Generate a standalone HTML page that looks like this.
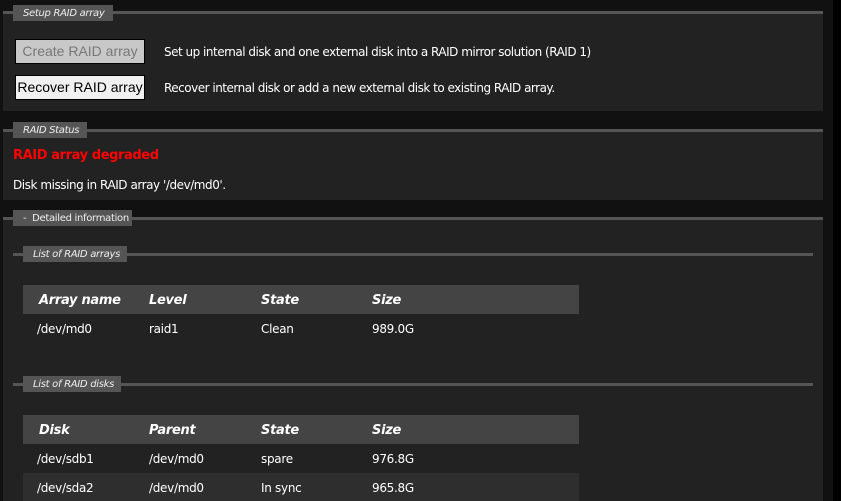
<!DOCTYPE html>
<html><head><meta charset="utf-8"><style>
*{margin:0;padding:0;box-sizing:border-box}
html,body{width:841px;height:501px;overflow:hidden}
body{background:#111;position:relative;font-family:"DejaVu Sans","Liberation Sans",sans-serif;color:#fff;font-size:12px}
.a{position:absolute}
.panel{position:absolute;left:3px;width:820px;background:#222}
.line{position:absolute;height:3px;background:#555}
.leg{position:absolute;background:#555;color:#eee;font-style:italic;font-size:10px;line-height:17px;padding-left:10px;white-space:nowrap;letter-spacing:-0.3px}
.btn{position:absolute;left:15px;width:130px;height:25px;border:1px solid #000;font-family:"Liberation Sans",sans-serif;font-size:14px;line-height:23px;text-align:center}
.txt{position:absolute;left:164px;font-size:12px;letter-spacing:-0.5px;color:#fff}
.th{position:absolute;left:23px;width:556px;height:29px;background:#444}
.row{position:absolute;left:23px;width:556px;height:29px}
.c{position:absolute;top:0;line-height:31px;font-size:12px;letter-spacing:-0.3px}
.th .c{font-weight:bold;font-style:italic;font-size:13px;line-height:31px}
</style></head><body>
<div class="a" style="left:833px;top:0;width:8px;height:501px;background:#000"></div>

<div class="panel" style="top:12px;height:99px"></div>
<div class="line" style="left:3px;top:11px;width:820px"></div>
<div class="leg" style="left:13px;top:5px;width:100px;height:16px">Setup RAID array</div>
<div class="btn" style="top:39px;background:#c8c8c8;color:#777">Create RAID array</div>
<div class="btn" style="top:75px;background:#f0f0f0;color:#000">Recover RAID array</div>
<div class="txt" style="top:45px">Set up internal disk and one external disk into a RAID mirror solution (RAID 1)</div>
<div class="txt" style="top:81px">Recover internal disk or add a new external disk to existing RAID array.</div>

<div class="panel" style="top:130px;height:70px"></div>
<div class="line" style="left:3px;top:129px;width:820px"></div>
<div class="leg" style="left:13px;top:122px;width:74px;height:16px">RAID Status</div>
<div class="a" style="left:13px;top:148px;color:#f00;font-weight:bold;font-size:13px;letter-spacing:-0.4px">RAID array degraded</div>
<div class="a" style="left:13px;top:178px;font-size:12px;letter-spacing:-0.45px">Disk missing in RAID array '/dev/md0'.</div>

<div class="panel" style="top:218px;height:283px"></div>
<div class="line" style="left:3px;top:217px;width:820px"></div>
<div class="leg" style="left:13px;top:210px;width:119px;height:16px;font-style:normal;padding-left:10px">-&nbsp; Detailed information</div>

<div class="line" style="left:13px;top:253px;width:800px"></div>
<div class="leg" style="left:23px;top:246px;width:104px;height:16px">List of RAID arrays</div>
<div class="th" style="top:285px"><span class="c" style="left:16px">Array name</span><span class="c" style="left:126px">Level</span><span class="c" style="left:238px">State</span><span class="c" style="left:349px">Size</span></div>
<div class="row" style="top:314px"><span class="c" style="left:14px">/dev/md0</span><span class="c" style="left:126px">raid1</span><span class="c" style="left:238px">Clean</span><span class="c" style="left:349px">989.0G</span></div>

<div class="line" style="left:13px;top:383px;width:800px"></div>
<div class="leg" style="left:23px;top:376px;width:98px;height:16px">List of RAID disks</div>
<div class="th" style="top:415px"><span class="c" style="left:16px">Disk</span><span class="c" style="left:126px">Parent</span><span class="c" style="left:238px">State</span><span class="c" style="left:349px">Size</span></div>
<div class="row" style="top:444px"><span class="c" style="left:14px">/dev/sdb1</span><span class="c" style="left:126px">/dev/md0</span><span class="c" style="left:238px">spare</span><span class="c" style="left:349px">976.8G</span></div>
<div class="row" style="top:473px;height:28px;background:#2e2e2e"><span class="c" style="left:14px">/dev/sda2</span><span class="c" style="left:126px">/dev/md0</span><span class="c" style="left:238px">In sync</span><span class="c" style="left:349px">965.8G</span></div>
</body></html>
